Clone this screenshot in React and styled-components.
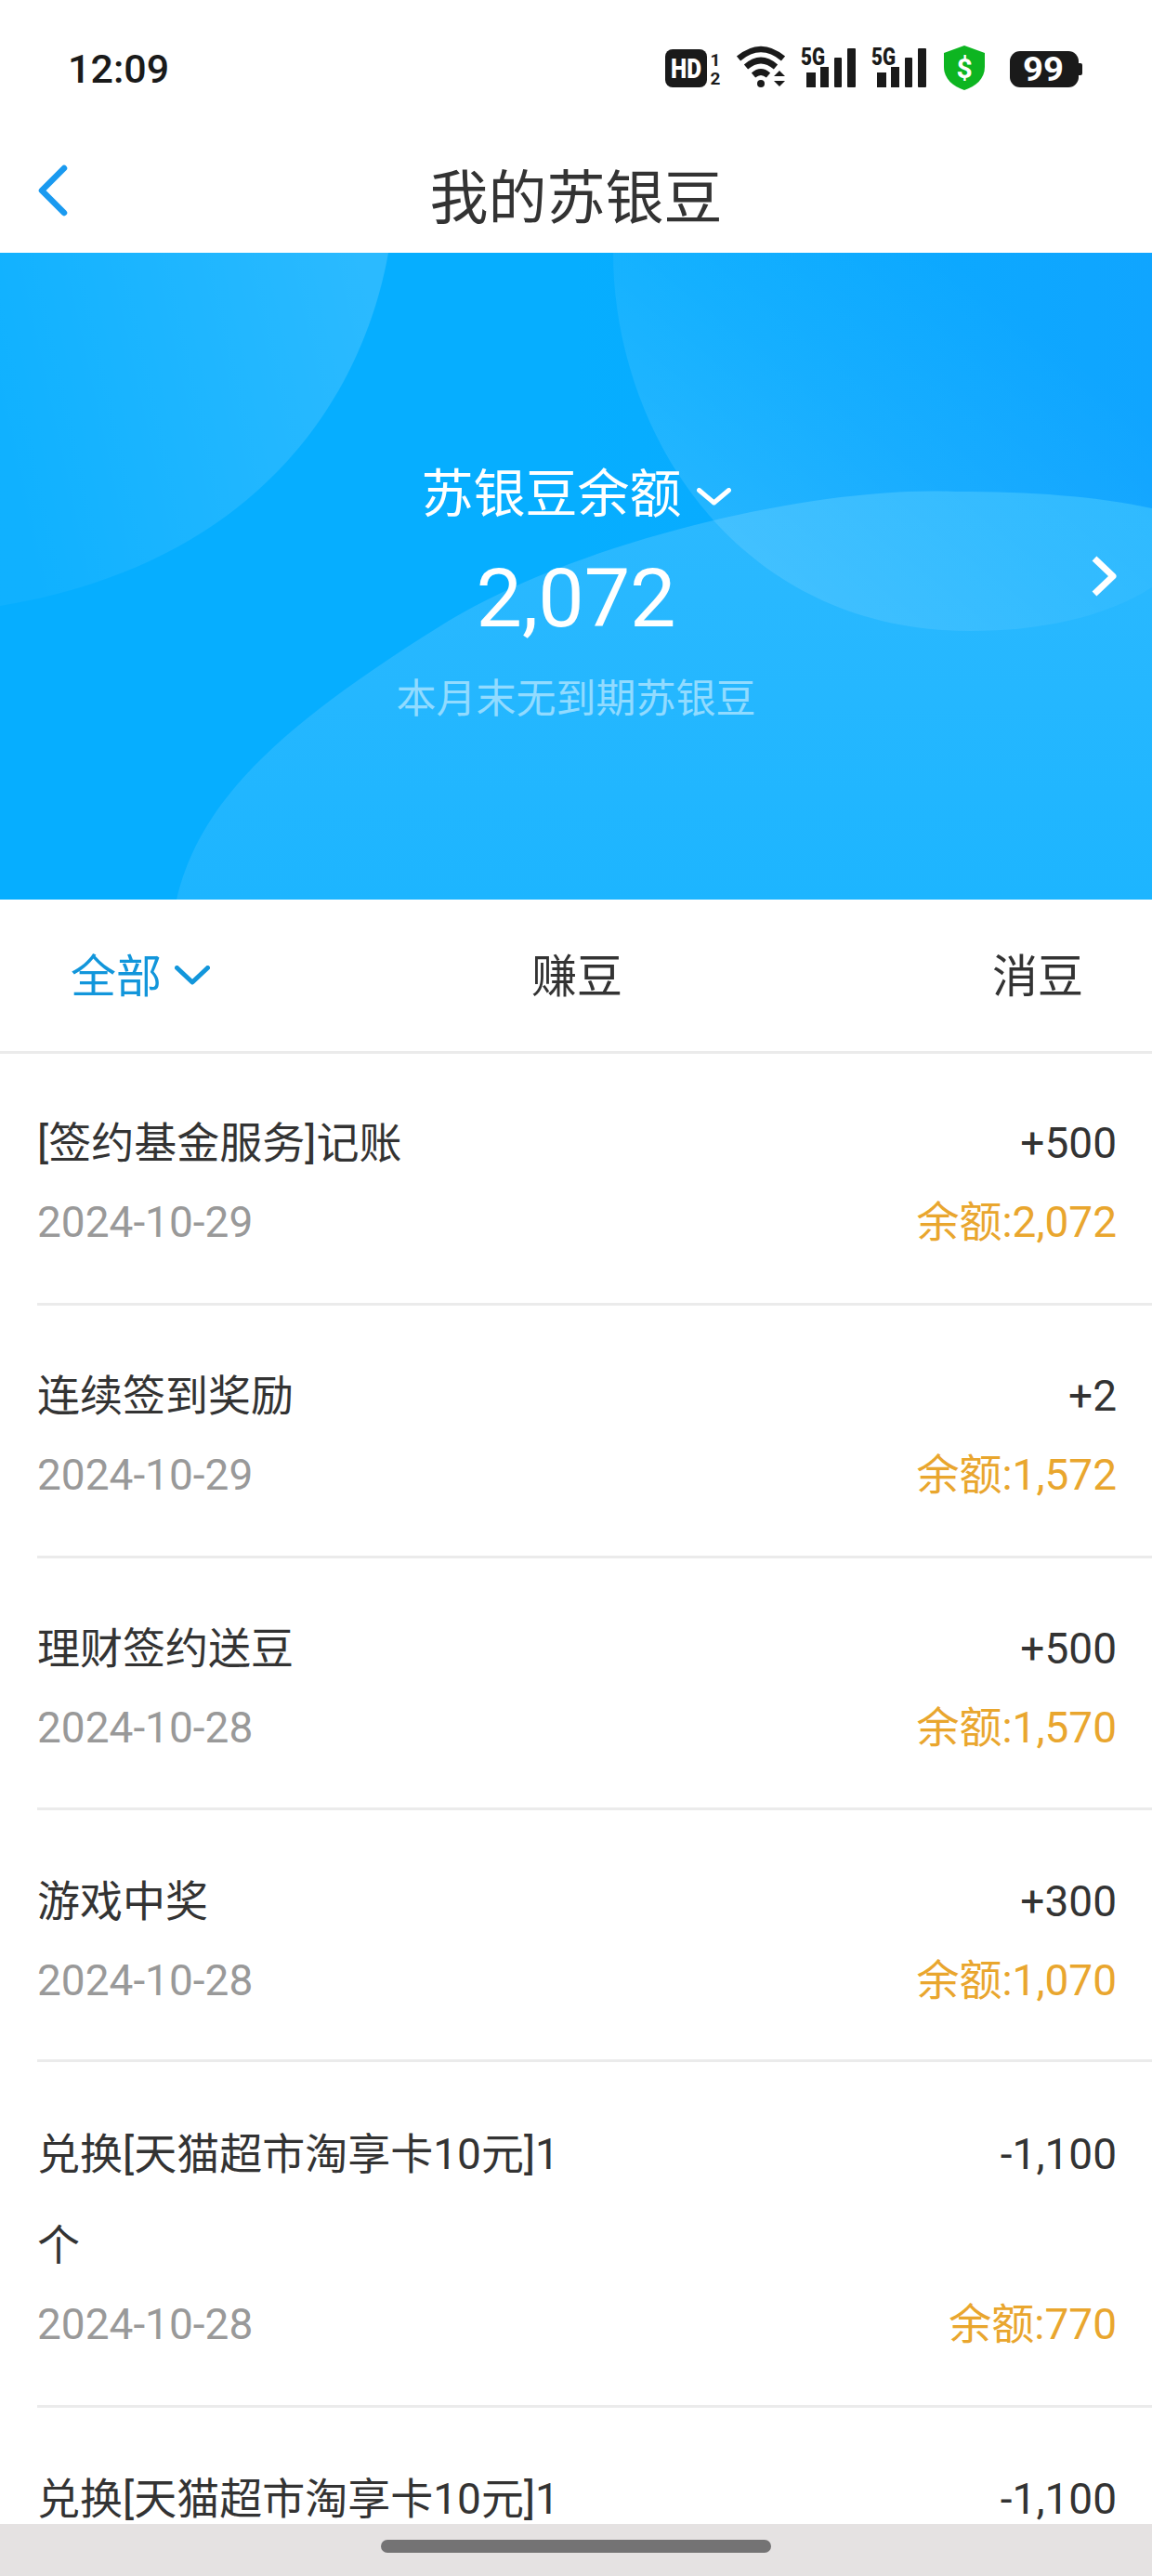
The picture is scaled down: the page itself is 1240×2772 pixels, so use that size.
import styled, { createGlobalStyle } from "styled-components";

const FONT = `Roboto, "Noto Sans CJK SC", sans-serif`;

const GlobalStyle = createGlobalStyle`
    html, body {
        margin: 0;
        padding: 0;
        background: #ffffff;
        font-family: ${FONT};
    }
`;

const Page = styled.div`
    position: relative;
    width: 1240px;
    height: 2772px;
    overflow: hidden;
    background: #ffffff;
`;

const StatusBar = styled.div`
    height: 148px;
    padding: 0 74px 0 73px;
    display: flex;
    align-items: center;
    justify-content: space-between;
    box-sizing: border-box;
`;

const Time = styled.span`
    font-size: 43px;
    font-weight: 500;
    color: #1a1a1a;
`;

const StatusIcons = styled.svg`
    display: block;
`;

const NavBar = styled.div`
    position: relative;
    height: 124px;
    box-sizing: border-box;
    padding-bottom: 6px;
    display: flex;
    align-items: center;
    justify-content: center;
    font-size: 63px;
    color: #333333;
`;

const BackIcon = styled.svg`
    position: absolute;
    left: 36px;
    top: 28px;
`;

const Hero = styled.div`
    position: relative;
    height: 696px;
    overflow: hidden;
    display: flex;
    flex-direction: column;
    align-items: center;
    color: #ffffff;
    background: linear-gradient(90deg, #06aeff 0%, #06aeff 50%, #10a5ff 100%);
`;

const HeroArt = styled.svg`
    position: absolute;
    inset: 0;
`;

const HeroLabel = styled.div`
    position: relative;
    margin-top: 224px;
    font-size: 56px;
    line-height: 72px;
    display: flex;
    align-items: center;
    gap: 16px;
`;

const HeroValue = styled.div`
    position: relative;
    margin-top: 24px;
    font-size: 88px;
    line-height: 104px;
`;

const HeroNote = styled.div`
    position: relative;
    margin-top: 28px;
    font-size: 43px;
    line-height: 56px;
    color: rgba(255, 255, 255, 0.5);
`;

const HeroArrow = styled.svg`
    position: absolute;
    right: 37px;
    top: 325px;
`;

const Tabs = styled.div`
    height: 166px;
    box-sizing: border-box;
    border-bottom: 3px solid #ebebeb;
    padding: 0 74px 6px 76px;
    display: grid;
    grid-template-columns: 1fr auto 1fr;
    align-items: center;
`;

const Tab = styled.div`
    display: flex;
    align-items: center;
    justify-content: ${(p) => p.$justify || "flex-start"};
    gap: 14px;
    font-size: 49px;
    color: ${(p) => (p.$active ? "#1296db" : "#333333")};
`;

const Row = styled.div`
    margin-left: 40px;
    padding: ${(p) => p.$top}px 38px 0 0;
    box-sizing: border-box;
    height: ${(p) => p.$height}px;
    border-bottom: ${(p) => (p.$last ? "none" : "3px solid #ebebeb")};
    display: flex;
    justify-content: space-between;
`;

const RowLeft = styled.div`
    width: 580px;
    display: flex;
    flex-direction: column;
`;

const RowRight = styled.div`
    display: flex;
    flex-direction: column;
    align-items: flex-end;
`;

const RowTitle = styled.div`
    font-size: 46px;
    line-height: 98px;
    color: #333333;
    margin-top: -16px;
`;

const RowDate = styled.div`
    font-size: 46px;
    line-height: 72px;
    color: #999999;
`;

const RowAmount = styled.div`
    font-size: 46px;
    line-height: 98px;
    color: #333333;
    margin-top: -16px;
`;

const RowBalance = styled.div`
    font-size: 46px;
    line-height: 72px;
    color: #e9a62e;
    margin-top: ${(p) => (p.$wrap ? "98px" : "0")};
`;

const HomeBar = styled.div`
    position: absolute;
    left: 0;
    right: 0;
    bottom: 0;
    height: 56px;
    padding-top: 17px;
    box-sizing: border-box;
    background: #e5e2e2;
    display: flex;
    justify-content: center;
`;

const HomePill = styled.div`
    width: 420px;
    height: 14px;
    border-radius: 7px;
    background: #747374;
`;

const ChevronSvg = styled.svg`
    margin-top: 5px;
`;

const Chevron = ({ width, height, color, stroke }) => (
    <ChevronSvg width={width} height={height} viewBox={`0 0 ${width} ${height}`} fill="none">
        <path
            d={`M2.5 2.5 L${width / 2} ${height - 3} L${width - 2.5} 2.5`}
            stroke={color}
            strokeWidth={stroke}
            strokeLinecap="round"
            strokeLinejoin="round"
        />
    </ChevronSvg>
);

// bars + "5G" label, x is the left edge of the label
const Signal = ({ x }) => (
    <g fill="#1a1a1a">
        <text x={x} y="70" fontSize="25" fontWeight="900" fontFamily="Roboto" textLength="26" lengthAdjust="spacingAndGlyphs">5G</text>
        <rect x={x + 6} y="78" width="10" height="16" />
        <rect x={x + 21} y="72" width="9" height="22" />
        <rect x={x + 36} y="62" width="8" height="32" rx="1" />
        <rect x={x + 50} y="52" width="9" height="42" rx="1" />
    </g>
);

const rows = [
    { title: "[签约基金服务]记账", amount: "+500", date: "2024-10-29", balance: "余额:2,072", top: 63 },
    { title: "连续签到奖励", amount: "+2", date: "2024-10-29", balance: "余额:1,572", top: 64 },
    { title: "理财签约送豆", amount: "+500", date: "2024-10-28", balance: "余额:1,570", top: 64 },
    { title: "游戏中奖", amount: "+300", date: "2024-10-28", balance: "余额:1,070", top: 65 },
    { title: "兑换[天猫超市淘享卡10元]1个", amount: "-1,100", date: "2024-10-28", balance: "余额:770", wrap: true, top: 66 },
    { title: "兑换[天猫超市淘享卡10元]1", amount: "-1,100", last: true, top: 65 },
];

export default function App() {
    return (
        <Page>
            <GlobalStyle />
            <StatusBar>
                <Time>12:09</Time>
                {/* viewBox uses page coordinates */}
                <StatusIcons width="450" height="70" viewBox="716 39 450 70">
                    <rect x="716" y="53" width="45" height="41" rx="8" fill="#1a1a1a" />
                    <text x="738.5" y="84" fontSize="29" fontWeight="900" fill="#fff" textAnchor="middle" fontFamily="Roboto" textLength="33" lengthAdjust="spacingAndGlyphs">HD</text>
                    <text x="770" y="71" fontSize="19" fontWeight="700" fill="#1a1a1a" textAnchor="middle" fontFamily="Roboto">1</text>
                    <text x="770" y="91" fontSize="19" fontWeight="700" fill="#1a1a1a" textAnchor="middle" fontFamily="Roboto">2</text>

                    <g fill="none" stroke="#1a1a1a" strokeWidth="6.5">
                        <path d="M795 63 Q819 43 843 63" />
                        <path d="M803 72 Q819 58 835 72" />
                        <path d="M811 81 Q819 74 827 81" />
                    </g>
                    <circle cx="819" cy="90" r="4" fill="#1a1a1a" />
                    <path d="M833 82 L839 76 L845 82 Z M833 87 L845 87 L839 93 Z" fill="#1a1a1a" />

                    <Signal x={862} />
                    <Signal x={938} />

                    <path d="M1038 49 L1060 57 L1060 72 C1060 85 1050 93 1038 97 C1026 93 1016 85 1016 72 L1016 57 Z" fill="#0db521" />
                    <text x="1038" y="84" fontSize="30" fontWeight="700" fill="#fff" textAnchor="middle" fontFamily="Roboto">$</text>

                    <rect x="1087" y="55" width="74" height="39" rx="11" fill="#1a1a1a" />
                    <path d="M1161 68 h2 a2 2 0 0 1 2 2 v9 a2 2 0 0 1 -2 2 h-2 Z" fill="#1a1a1a" />
                    <text x="1123" y="87" fontSize="36" fontWeight="700" fill="#fff" textAnchor="middle" fontFamily="Roboto" textLength="44" lengthAdjust="spacingAndGlyphs">99</text>
                </StatusIcons>
            </StatusBar>
            <NavBar>
                <BackIcon width="40" height="60" viewBox="0 0 40 60" fill="none">
                    <path d="M33 5 L9 29 L33 53" stroke="#1a9af0" strokeWidth="6.5" strokeLinecap="round" strokeLinejoin="round" />
                </BackIcon>
                我的苏银豆
            </NavBar>
            <Hero>
                <HeroArt width="1240" height="696" viewBox="0 0 1240 696">
                    <defs>
                        <linearGradient id="blobRight" x1="0.1" y1="0.8" x2="0.8" y2="0.2">
                            <stop offset="0" stopColor="#ffffff" stopOpacity="0.13" />
                            <stop offset="0.55" stopColor="#ffffff" stopOpacity="0.05" />
                            <stop offset="1" stopColor="#ffffff" stopOpacity="0" />
                        </linearGradient>
                        <linearGradient id="blobLeft" x1="1" y1="0.3" x2="0" y2="0.5">
                            <stop offset="0" stopColor="#ffffff" stopOpacity="0.15" />
                            <stop offset="1" stopColor="#ffffff" stopOpacity="0.04" />
                        </linearGradient>
                        <linearGradient id="blobBottom" x1="0.5" y1="0" x2="0.5" y2="1">
                            <stop offset="0" stopColor="#2cb9ff" />
                            <stop offset="1" stopColor="#1db5ff" />
                        </linearGradient>
                    </defs>
                    <path d="M418 0 C395 130 300 330 0 380 L0 0 Z" fill="url(#blobLeft)" />
                    <path d="M190 696 C215 590 300 510 475 401 C620 310 880 250 1028 257 C1110 257 1180 262 1240 275 L1240 696 Z" fill="url(#blobBottom)" />
                    <path d="M660 0 C660 190 790 407 1044 407 C1120 407 1190 392 1240 360 L1240 0 Z" fill="url(#blobRight)" />
                </HeroArt>
                <HeroLabel>
                    苏银豆余额
                    <Chevron width={37} height={19} color="#fff" stroke={5} />
                </HeroLabel>
                <HeroValue>2,072</HeroValue>
                <HeroNote>本月末无到期苏银豆</HeroNote>
                <HeroArrow width="30" height="46" viewBox="0 0 30 46" fill="none">
                    <path d="M5 4 L25 23 L5 42" stroke="#fff" strokeWidth="7" strokeLinejoin="round" />
                </HeroArrow>
            </Hero>
            <Tabs>
                <Tab $active>
                    全部
                    <Chevron width={38} height={21} color="#1296db" stroke={5} />
                </Tab>
                <Tab>赚豆</Tab>
                <Tab $justify="flex-end">消豆</Tab>
            </Tabs>
            {rows.map((r, i) => (
                <Row key={i} $height={r.wrap ? 371.67 : 271.33} $top={r.top} $last={r.last}>
                    <RowLeft>
                        <RowTitle>{r.title}</RowTitle>
                        {r.date && <RowDate>{r.date}</RowDate>}
                    </RowLeft>
                    <RowRight>
                        <RowAmount>{r.amount}</RowAmount>
                        {r.balance && <RowBalance $wrap={r.wrap}>{r.balance}</RowBalance>}
                    </RowRight>
                </Row>
            ))}
            <HomeBar>
                <HomePill />
            </HomeBar>
        </Page>
    );
}
